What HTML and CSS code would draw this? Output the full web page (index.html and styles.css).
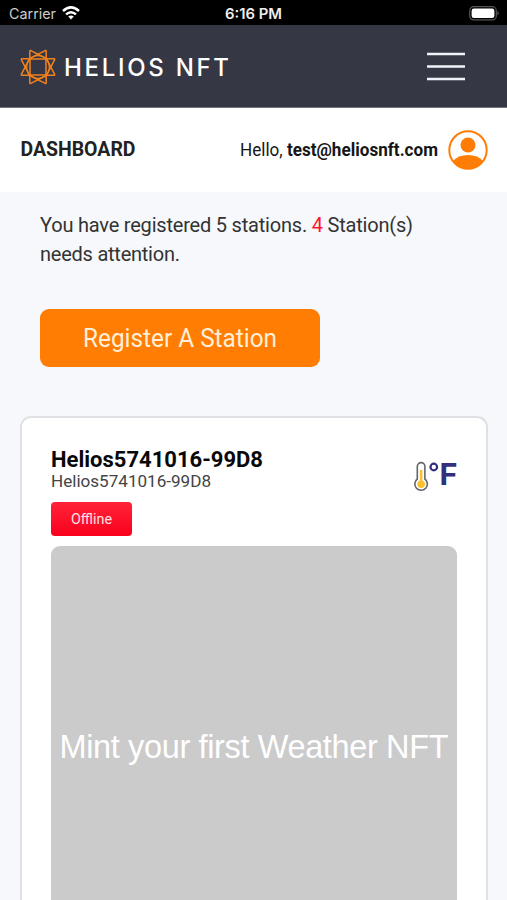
FILE: index.html
```html
<!DOCTYPE html>
<html lang="en">
<head>
<meta charset="utf-8">
<title>Helios NFT</title>
<link rel="stylesheet" href="styles.css">
</head>
<body>
<div class="status">
  <div class="carrier"><svg class="label" width="49" height="20"><text x="1" y="16" textLength="47" lengthAdjust="spacingAndGlyphs">Carrier</text></svg>
    <svg width="18" height="14" viewBox="0 0 18 14" fill="none" stroke="#fff" stroke-width="2.5"><path d="M1 5Q9-2.2 17 5M4 8.4Q9 4 14 8.4"/><path d="M9 13.4L6.2 10.6Q9 8.4 11.8 10.6Z" fill="#fff" stroke="none"/></svg>
  </div>
  <svg class="clock" width="60" height="20"><text x="1" y="16" textLength="57" lengthAdjust="spacingAndGlyphs">6:16 PM</text></svg>
  <svg class="battery" width="31" height="15" viewBox="0 0 31 15"><rect x=".7" y=".7" width="26.6" height="13.2" rx="4" fill="none" stroke="#555" stroke-width="1.2"/><rect x="2.6" y="2.6" width="22.8" height="9.4" rx="2.3" fill="#fff"/><path d="M28.5 5Q31 7.2 28.5 9.4Z" fill="#666"/></svg>
</div>
<header class="nav">
  <svg class="sun" width="38" height="36" viewBox="0 0 38 36" fill="none" stroke="#f0821e" stroke-width="1.5"><path d="M10.8 1.2L27.5 9.5L36 26.2M36 9.8L27.5 26.5L10.8 34.8M27.2 34.8L10.5 26.5L2 9.8M2 26.2L10.5 9.5L27.2 1.2"/><path d="M10.8 1.2V9.5M27.2 1.2V9.5M10.8 26.5V34.8M27.2 26.5V34.8M2 9.8H10.5M2 26.2H10.5M27.5 9.8H36M27.5 26.2H36"/><rect x="11" y="10" width="16" height="16"/><circle cx="19" cy="18" r="11.3" stroke-width="1.3"/></svg>
  <svg class="brand" width="168" height="30"><text x="0" y="24" textLength="165">HELIOS NFT</text></svg>
  <svg class="menu" width="38" height="30" viewBox="0 0 38 30" stroke="#f0f2fa" stroke-width="2.5"><path d="M0 2H38M0 14.5H38M0 27H38"/></svg>
</header>
<section class="bar">
  <h1><svg width="118" height="26"><text x="0.5" y="19" textLength="115" lengthAdjust="spacingAndGlyphs">DASHBOARD</text></svg></h1>
  <svg class="hello" width="200" height="26"><text x="0" y="19" textLength="198" lengthAdjust="spacingAndGlyphs">Hello, <tspan class="bold">test@heliosnft.com</tspan></text></svg>
  <svg class="avatar" width="40" height="40" viewBox="0 0 40 40"><circle cx="20" cy="20" r="18.7" fill="#fff" stroke="#ff7d05" stroke-width="2"/><circle cx="20" cy="15" r="7.5" fill="#ff7d05"/><path d="M5 31Q10 25 20 25T35 31Q29 39 20 39T5 31Z" fill="#ff7d05"/></svg>
</section>
<main>
  <div class="intro">
    <svg width="400" height="60"><text x="0" y="24" textLength="373">You have registered 5 stations. <tspan class="alert">4</tspan> Station(s)</text><text x="0" y="53" textLength="140">needs attention.</text></svg>
  </div>
  <button class="register"><svg width="196" height="34"><text x="1" y="25.5" textLength="194" lengthAdjust="spacingAndGlyphs">Register A Station</text></svg></button>
  <article class="card">
    <div class="head">
      <div>
        <h2><svg width="216" height="28"><text x="0" y="22" textLength="212" lengthAdjust="spacingAndGlyphs">Helios5741016-99D8</text></svg></h2>
        <svg class="sub" width="170" height="20"><text x="0" y="14" textLength="160" lengthAdjust="spacingAndGlyphs">Helios5741016-99D8</text></svg>
        <span class="offline">Offline</span>
      </div>
      <div class="temp">
        <svg width="44" height="34" viewBox="0 0 44 34"><path d="M4.3 19V6.4a3.8 3.8 0 0 1 7.6 0V19a6.3 6.3 0 1 1-7.6 0Z" fill="#fff" stroke="#62656d" stroke-width="1.6"/><path d="M8.1 10V23" stroke="#fbc02d" stroke-width="2.6"/><circle cx="8.1" cy="24.3" r="3.8" fill="#fbc02d"/><circle cx="20.8" cy="7" r="3.3" fill="none" stroke="#332f7d" stroke-width="2.2"/><text x="26.5" y="24.7" textLength="18" lengthAdjust="spacingAndGlyphs">F</text></svg>
      </div>
    </div>
    <div class="mint"><svg width="390" height="50"><text x="0.5" y="36" textLength="389">Mint your first Weather NFT</text></svg></div>
  </article>
</main>
</body>
</html>
```
FILE: styles.css
```css
* { box-sizing: border-box; }
html { overflow: hidden; }
body { margin: 0; width: 507px; height: 900px; overflow: hidden; background: #f6f8fc; font-family: Roboto, sans-serif; color: #2b2b2b; display: flex; flex-direction: column; }
svg { display: block; overflow: visible; }
h1, h2 { margin: 0; font-weight: 700; }
.status { flex: none; height: 25px; background: #000; display: grid; grid-template-columns: 1fr auto 1fr; align-items: center; padding: 0 7px 0 8px; font: 15px Inter, sans-serif; }
.status text { fill: #eee; font-size: 14.5px; }
.status .label text { fill: #ccc; }
.carrier { display: flex; align-items: center; gap: 5px; }
.clock text { font-weight: 600; }
.battery { justify-self: end; margin-top: 1px; }
.nav { flex: none; height: 83px; background: #363745; border-bottom: 1px solid #73737d; display: flex; align-items: center; padding: 1px 42px 0 19px; }
.brand { margin-left: 7px; }
.brand text { font: 500 24px Inter, sans-serif; fill: #fff; }
.menu { margin-left: auto; }
.bar { flex: none; height: 84px; background: #fff; display: flex; align-items: center; padding: 0 19px 0 20px; }
.bar h1 text { font-size: 20px; fill: #222; }
.hello { margin-left: auto; }
.hello text { font-size: 17.5px; fill: #151515; }
.bold { font-weight: 700; }
.avatar { margin-left: 8px; }
main { flex: 1; min-height: 0; display: flex; flex-direction: column; padding: 16px 19px 0 20px; }
.intro { flex: none; padding-left: 20px; height: 101px; }
.intro text { font-size: 20px; fill: #333; }
.intro .alert { fill: #ff1730; }
.register { flex: none; display: flex; align-items: center; justify-content: center; width: 280px; height: 58px; margin-left: 20px; border: 0; border-radius: 9px; background: #ff7d02; padding: 0; }
.register text { font: 25px Roboto, sans-serif; fill: #ffefd8; }
.card { flex: 1; min-height: 0; display: flex; flex-direction: column; margin-top: 49px; padding: 27px 29px 0; background: #fff; border: 2px solid #dfe1e5; border-bottom: 0; border-radius: 11px 11px 0 0; }
.head { flex: none; display: flex; justify-content: space-between; height: 101px; }
.head h2 text { font-size: 22.5px; fill: #080808; }
.sub text { font-size: 17px; fill: #444; }
.offline { display: flex; align-items: center; justify-content: center; margin-top: 9px; width: 81px; height: 34px; border-radius: 4px; background: linear-gradient(#ff2438, #fa001d); color: #ffe2e4; font-size: 14.3px; }
.temp { padding-top: 15px; }
.temp text { font: 700 29.5px Inter, sans-serif; fill: #332f7d; }
.mint { flex: 1; min-height: 0; background: #cbcbcb; border-radius: 9px 9px 0 0; display: flex; justify-content: center; padding-top: 176px; }
.mint text { font: 32.5px "Liberation Sans", sans-serif; fill: #fff; }
```
